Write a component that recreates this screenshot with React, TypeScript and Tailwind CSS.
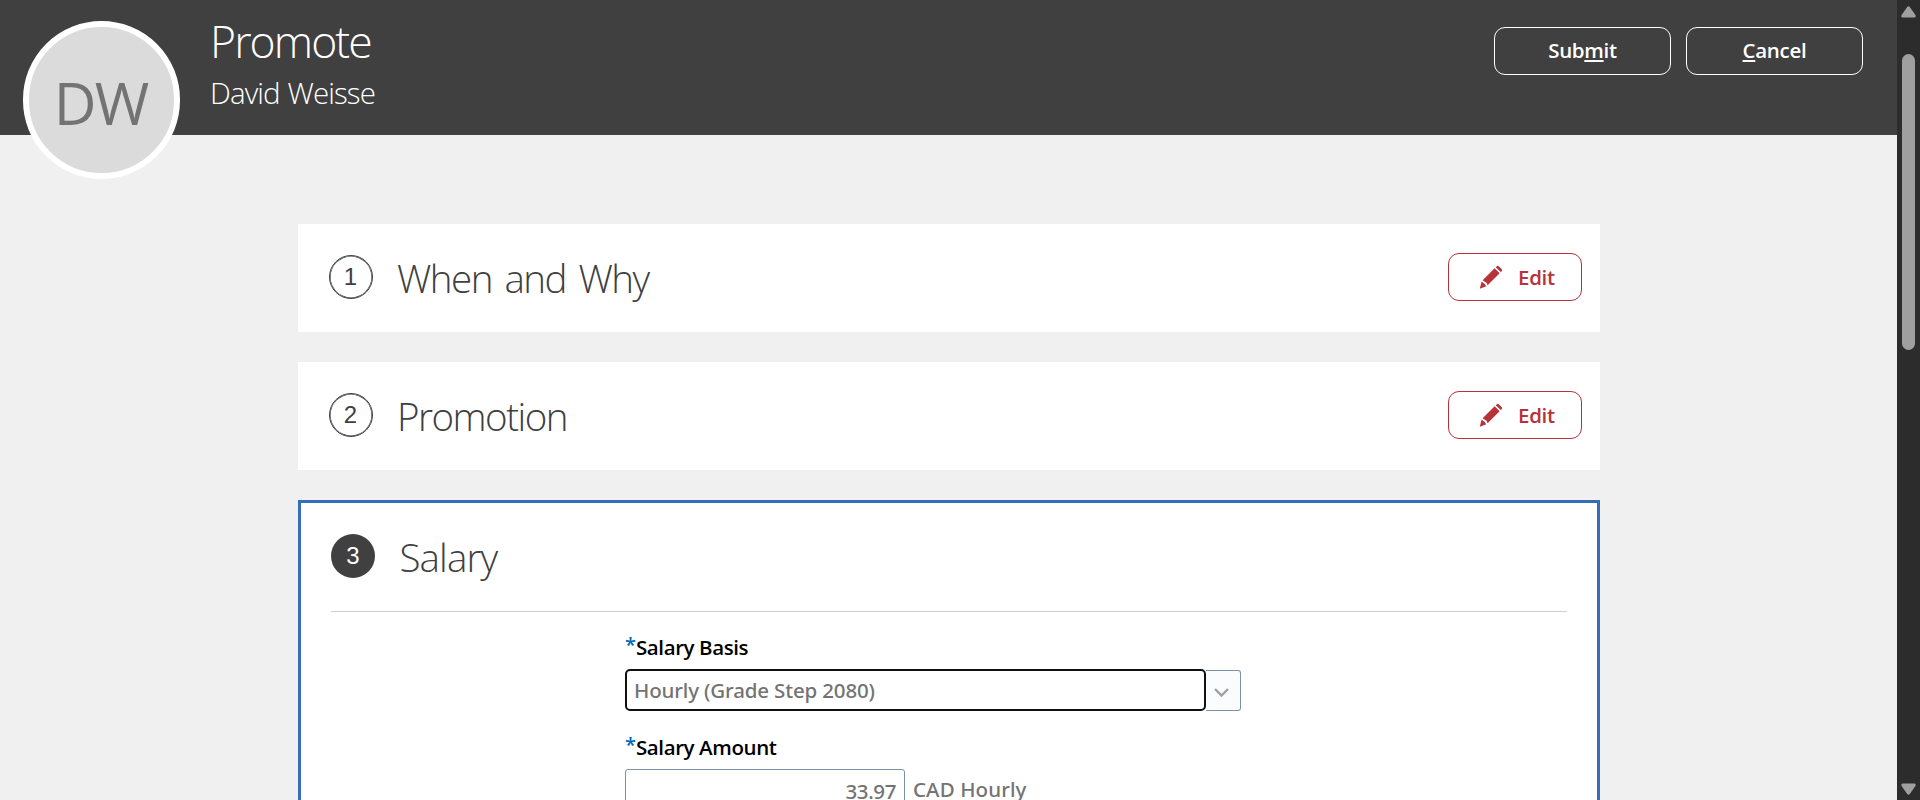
import React from "react";

function PencilIcon() {
  return (
    <svg className="h-6 w-6 shrink-0" viewBox="0 0 24 24" fill="#b8323a">
      <path d="M17.6 1.4 Q18.6 0.3 19.7 1.2 L22.6 4 Q23.6 5.2 22.7 6.2 L21.8 7.1 L16.7 2.2 Z" />
      <path d="M15.6 3.3 L20.6 8.2 L8.6 20.2 L7.6 17.8 L5.8 16.7 L3.6 15.2 Z" />
      <path d="M2.6 16.4 L4.6 18.2 L5.8 18.8 L6.4 20.2 L7.4 21.2 L0.8 23.8 Z" />
    </svg>
  );
}

function EditButton() {
  return (
    <button className="mb-[2px] flex h-12 w-[134px] items-center rounded-[11px] border border-[#b8323a] pl-[30px] text-[#b8323a]">
      <PencilIcon />
      <span className="ml-[15px] text-[20.5px] font-semibold leading-6 tracking-[-0.3px]">Edit</span>
    </button>
  );
}

function StepHeader({ step, title, spacing, active }: { step: number; title: string; spacing: string; active?: boolean }) {
  return (
    <div className="flex items-center">
      <span
        className={
          "flex h-11 w-11 items-center justify-center rounded-full font-['Liberation_Sans',sans-serif] text-[24px] leading-none " +
          (active ? "bg-[#404040] text-white" : "border border-[#404040] text-[#404040] shadow-[inset_0_0_0_0.6px_#404040]")
        }
      >
        {step}
      </span>
      <h2 className={"ml-[24.5px] mt-[2px] whitespace-nowrap text-[38.5px] font-light leading-[44px] text-[#404040] " + spacing}>{title}</h2>
    </div>
  );
}

function Card({ step, title, spacing }: { step: number; title: string; spacing: string }) {
  return (
    <section className="flex h-[108px] items-center justify-between bg-white pl-[30.5px] pr-[18px]">
      <div className="mb-[2px]">
        <StepHeader step={step} title={title} spacing={spacing} />
      </div>
      <EditButton />
    </section>
  );
}

function FieldLabel({ children }: { children: string }) {
  return (
    <label className="flex h-[30px] items-center whitespace-nowrap text-[20.5px] font-semibold leading-[30px] tracking-[-0.4px] text-black">
      <span className="mb-[5px] w-[11px] text-[20px] text-[#0068b8]">*</span>
      {children}
    </label>
  );
}

export default function App() {
  return (
    <div className="flex h-[800px] w-[1920px] overflow-hidden bg-[#f0f0f0] font-['Open_Sans','Noto_Sans',sans-serif]">
      <div className="flex w-[1897px] flex-col">
        <header className="flex h-[135px] shrink-0 bg-[#404040] text-white">
          <div className="z-10 ml-[23px] mt-[21px] flex h-[158px] w-[157px] shrink-0 items-center justify-center rounded-full border-[6px] border-white bg-[#dbdbdb]">
            <span className="mr-0.5 mt-1 text-[59px] leading-none tracking-[-2px] text-[#737373]">DW</span>
          </div>
          <div className="ml-[30px] grow pt-[17px]">
            <h1 className="whitespace-nowrap text-[44.5px] font-light leading-[48px] tracking-[-1.9px]">Promote</h1>
            <p className="mt-[10px] whitespace-nowrap text-[29.5px] font-light leading-9 tracking-[-0.9px] [word-spacing:1px]">David Weisse</p>
          </div>
          <div className="mr-[34px] mt-[27px] flex gap-[15px] text-[20.5px] font-semibold tracking-[-0.3px]">
            <button className="h-12 w-[177px] rounded-[11px] border border-white pb-0.5">
              Sub<span className="underline decoration-2 underline-offset-2">m</span>it
            </button>
            <button className="h-12 w-[177px] rounded-[11px] border border-white pb-0.5">
              <span className="underline decoration-2 underline-offset-2">C</span>ancel
            </button>
          </div>
        </header>

        <main className="ml-[298px] mt-[89px] flex w-[1302px] flex-col gap-[30px]">
          <Card step={1} title="When and Why" spacing="tracking-[-1.5px] [word-spacing:4px]" />
          <Card step={2} title="Promotion" spacing="tracking-[-1.5px]" />

          <section className="h-[400px] shrink-0 border-[3px] border-[#376cb8] bg-white px-[30px] pt-[30px]">
            <StepHeader step={3} title="Salary" spacing="tracking-[-0.9px]" active />
            <div className="mt-[32px] border-t border-[#cfcfcf]" />
            <div className="ml-[294px] mt-[20px] flex flex-col">
              <FieldLabel>Salary Basis</FieldLabel>
              <div className="mt-[7px] flex h-[42px] items-center">
                <div className="flex h-[42px] w-[581px] items-center whitespace-nowrap rounded-[5px] border-[2.5px] border-[#101010] pl-[7px] font-['Noto_Sans',sans-serif] text-[20.5px] font-medium tracking-[-0.15px] text-[#737373]">
                  Hourly (Grade Step 2080)
                </div>
                <div className="flex h-[41px] w-[35px] items-center justify-center rounded-r-[3px] border border-l-0 border-[#7a92a5] bg-[#fbfcfe]">
                  <svg className="mr-[3px] mt-1 h-[9px] w-[15px]" viewBox="0 0 15 9" fill="none" stroke="#a0a0a0" strokeWidth="2.4">
                    <path d="M1 1 L7.5 7.5 L14 1" />
                  </svg>
                </div>
              </div>
              <div className="mt-[21px]">
                <FieldLabel>Salary Amount</FieldLabel>
              </div>
              <div className="mt-[7px] flex font-['Noto_Sans',sans-serif] text-[20.5px] font-medium text-[#737373]">
                <div className="flex h-[42px] w-[280px] items-center justify-end rounded-[3px] border border-[#7a92a5] pr-2 pt-[3px] tracking-[-0.4px]">33.97</div>
                <span className="ml-2 mt-[5px] whitespace-nowrap leading-[30px] tracking-[0.1px]">CAD Hourly</span>
              </div>
            </div>
          </section>
        </main>
      </div>

      <div className="flex w-[23px] flex-col items-center justify-between bg-[#2c2c2c] pb-[5px] pt-[6px]">
        <div className="flex flex-col items-center">
          <svg className="h-3 w-[15px]" viewBox="0 0 15 12" fill="#9f9f9f">
            <path d="M6.2 1 Q7.5 -0.6 8.8 1 L14.4 9 Q15.4 11.4 13 11.5 L2 11.5 Q-0.4 11.4 0.6 9 Z" />
          </svg>
          <div className="mt-9 h-[296px] w-[13px] rounded-full bg-[#9f9f9f]" />
        </div>
        <svg className="h-3 w-[15px] rotate-180" viewBox="0 0 15 12" fill="#9f9f9f">
          <path d="M6.2 1 Q7.5 -0.6 8.8 1 L14.4 9 Q15.4 11.4 13 11.5 L2 11.5 Q-0.4 11.4 0.6 9 Z" />
        </svg>
      </div>
    </div>
  );
}
